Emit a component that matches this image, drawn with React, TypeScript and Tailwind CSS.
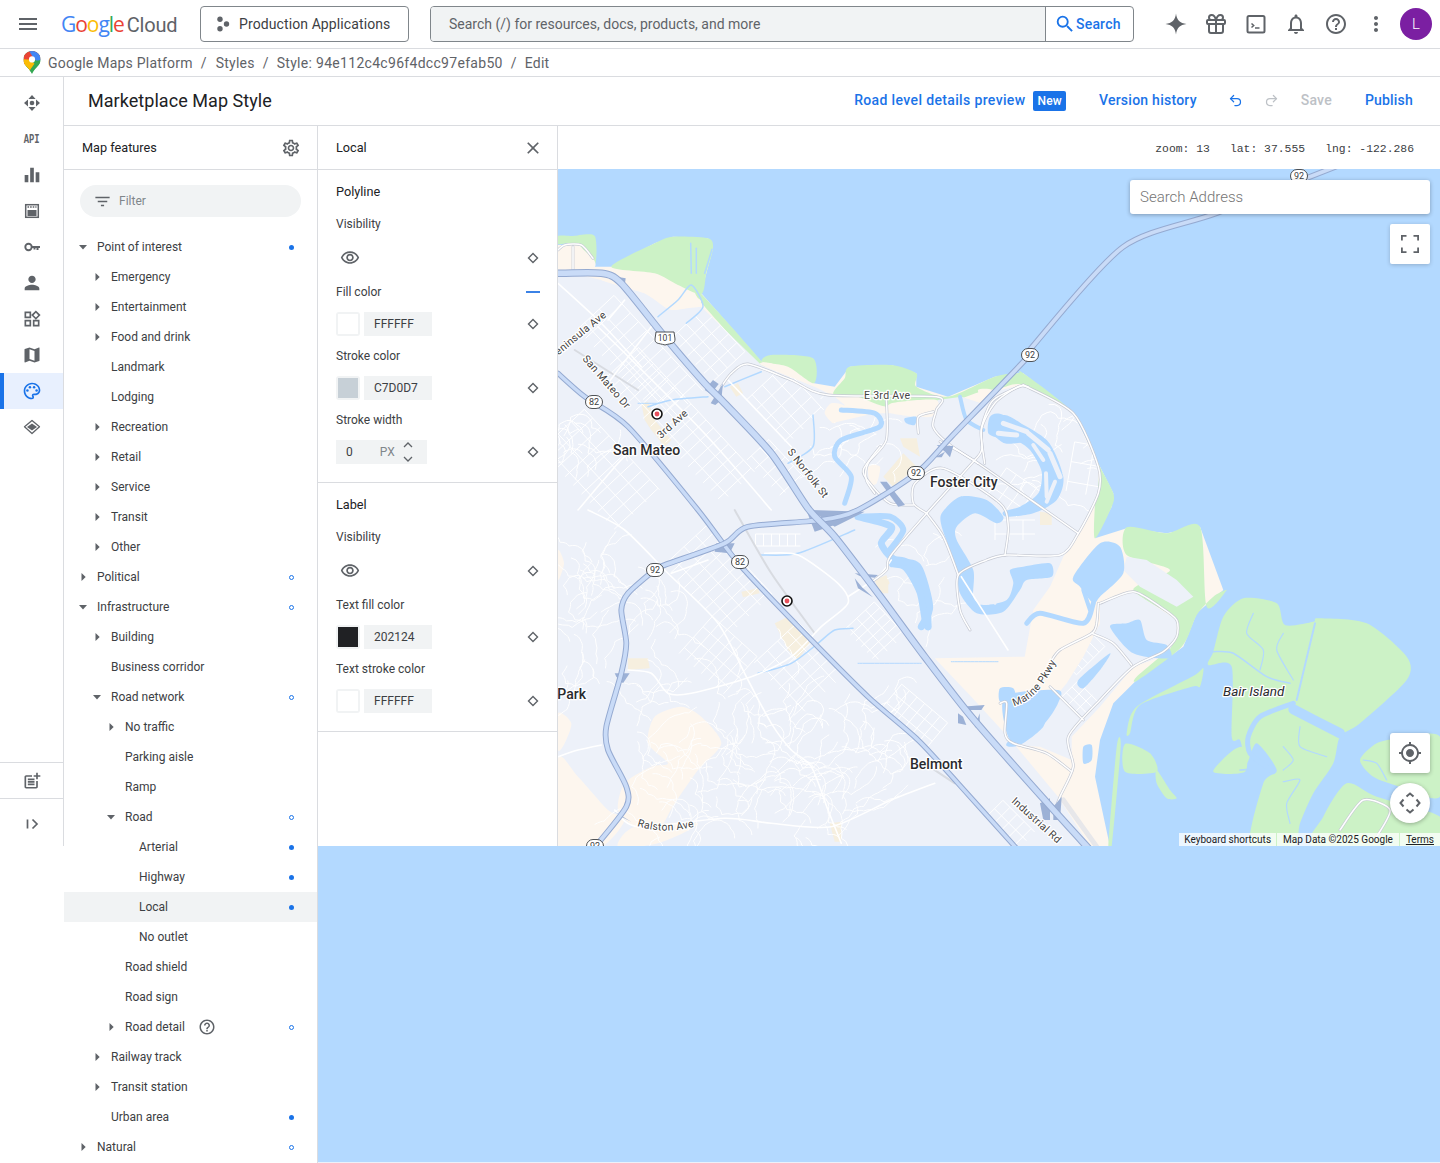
import React from "react";
import {
  MdMenu, MdOutlineNotifications, MdHelpOutline, MdMoreVert, MdOutlineSettings,
  MdFilterList, MdClose, MdOutlineVisibility, MdEqualizer, MdPerson,
  MdOutlineWidgets, MdMap, MdOutlinePalette, MdOutlinePostAdd, MdMyLocation, MdSearch,
} from "react-icons/md";
import { Gift, Undo2, Redo2 } from "lucide-react";

type Row = { label: string; level: number; arrow?: "down" | "right"; dot?: "fill" | "ring"; help?: boolean; selected?: boolean };
const rows: Row[] = [
  { label: "Point of interest", level: 0, arrow: "down", dot: "fill" },
  { label: "Emergency", level: 1, arrow: "right" },
  { label: "Entertainment", level: 1, arrow: "right" },
  { label: "Food and drink", level: 1, arrow: "right" },
  { label: "Landmark", level: 1 },
  { label: "Lodging", level: 1 },
  { label: "Recreation", level: 1, arrow: "right" },
  { label: "Retail", level: 1, arrow: "right" },
  { label: "Service", level: 1, arrow: "right" },
  { label: "Transit", level: 1, arrow: "right" },
  { label: "Other", level: 1, arrow: "right" },
  { label: "Political", level: 0, arrow: "right", dot: "ring" },
  { label: "Infrastructure", level: 0, arrow: "down", dot: "ring" },
  { label: "Building", level: 1, arrow: "right" },
  { label: "Business corridor", level: 1 },
  { label: "Road network", level: 1, arrow: "down", dot: "ring" },
  { label: "No traffic", level: 2, arrow: "right" },
  { label: "Parking aisle", level: 2 },
  { label: "Ramp", level: 2 },
  { label: "Road", level: 2, arrow: "down", dot: "ring" },
  { label: "Arterial", level: 3, dot: "fill" },
  { label: "Highway", level: 3, dot: "fill" },
  { label: "Local", level: 3, dot: "fill", selected: true },
  { label: "No outlet", level: 3 },
  { label: "Road shield", level: 2 },
  { label: "Road sign", level: 2 },
  { label: "Road detail", level: 2, arrow: "right", dot: "ring", help: true },
  { label: "Railway track", level: 1, arrow: "right" },
  { label: "Transit station", level: 1, arrow: "right" },
  { label: "Urban area", level: 1, dot: "fill" },
  { label: "Natural", level: 0, arrow: "right", dot: "ring" },
];

/* ---------- map geometry helpers (drawing only) ---------- */
const zones: Record<string, [number, number, number]> = {
  a: [558, 170, 1 / 3],
  b: [558, 510, 1 / 3],
  c: [860, 370, 1 / 3],
  d: [1000, 590, 1 / 3],
  p: [0, 0, 1],
};
function pts(s: string): [number, number][] {
  let z = zones.p;
  const out: [number, number][] = [];
  s.trim().split(/\s+/).forEach((t) => {
    if (zones[t]) { z = zones[t]; return; }
    const [x, y] = t.split(",").map(Number);
    out.push([z[0] + x * z[2], z[1] + y * z[2]]);
  });
  return out;
}
function curve(s: string, closed = false) {
  const p = pts(s);
  const n = p.length;
  const at = (i: number) => (closed ? p[(i + n) % n] : p[Math.max(0, Math.min(n - 1, i))]);
  let d = `M${p[0][0].toFixed(1)} ${p[0][1].toFixed(1)}`;
  const last = closed ? n : n - 1;
  for (let i = 0; i < last; i++) {
    const p0 = at(i - 1), p1 = at(i), p2 = at(i + 1), p3 = at(i + 2);
    const k = 0.13;
    d += `C${(p1[0] + (p2[0] - p0[0]) * k).toFixed(1)} ${(p1[1] + (p2[1] - p0[1]) * k).toFixed(1)} ${(p2[0] - (p3[0] - p1[0]) * k).toFixed(1)} ${(p2[1] - (p3[1] - p1[1]) * k).toFixed(1)} ${p2[0].toFixed(1)} ${p2[1].toFixed(1)}`;
  }
  return d + (closed ? "Z" : "");
}
function poly(s: string) {
  return "M" + pts(s).map((q) => `${q[0].toFixed(1)} ${q[1].toFixed(1)}`).join("L") + "Z";
}
function grid(cx: number, cy: number, len: number, wid: number, ang: number, sLen: number, sWid: number) {
  const r = (ang * Math.PI) / 180;
  const ux = Math.cos(r), uy = Math.sin(r), vx = -uy, vy = ux;
  let d = "";
  for (let t = -wid / 2; t <= wid / 2; t += sWid) {
    d += `M${(cx + vx * t - ux * len / 2).toFixed(1)} ${(cy + vy * t - uy * len / 2).toFixed(1)}L${(cx + vx * t + ux * len / 2).toFixed(1)} ${(cy + vy * t + uy * len / 2).toFixed(1)}`;
  }
  for (let t = -len / 2; t <= len / 2; t += sLen) {
    d += `M${(cx + ux * t - vx * wid / 2).toFixed(1)} ${(cy + uy * t - vy * wid / 2).toFixed(1)}L${(cx + ux * t + vx * wid / 2).toFixed(1)} ${(cy + uy * t + vy * wid / 2).toFixed(1)}`;
  }
  return d;
}
const rnd = (i: number) => { const v = Math.sin(i * 12.9898) * 43758.5453; return v - Math.floor(v); };
function wiggles(x: number, y: number, w: number, h: number, n: number, seed: number) {
  let d = "";
  for (let i = 0; i < n; i++) {
    let px = x + rnd(seed + i * 7) * w, py = y + rnd(seed + i * 11) * h;
    let a = rnd(seed + i * 13) * 6.28;
    d += `M${px.toFixed(1)} ${py.toFixed(1)}`;
    for (let j = 0; j < 6; j++) {
      a += (rnd(seed + i * 17 + j * 3) - 0.5) * 2.2;
      const nx = px + Math.cos(a) * 10, ny = py + Math.sin(a) * 10;
      d += `Q${(px + nx) / 2 + 2} ${(py + ny) / 2 - 2} ${nx.toFixed(1)} ${ny.toFixed(1)}`;
      px = nx; py = ny;
    }
  }
  return d;
}

const GREENS = [
  "a 0,198 40,198 46,198 110,198 110,285 60,222 0,222",
  "a 160,290 290,220 345,200 450,205 465,235 445,310 430,372 360,345 290,310",
  "a 430,372 612,575 600,585 425,392",
  "a 612,575 640,555 765,565 768,640 690,590",
  "a 826,672 860,625 875,590 1000,585 1075,610 1075,650 1170,680 1310,620 1380,610 c 490,10 640,130 720,290 760,370 755,410 705,505 705,400 715,290 640,130 490,45 420,55 360,65 300,85 230,80 a 1200,690 1000,712 900,680",
  "c 800,472 920,490 1020,470 d 620,50 680,0 640,20 590,75 545,170 415,270 410,260 510,170 530,90 400,0 c 930,600 800,555",
  "d 640,185 670,80 730,25 830,40 855,105 940,95 955,85 1100,100 1220,200 1220,270 1080,400 1020,440 1000,520 940,610 900,700 880,770 750,770 790,580 830,540 770,460 740,520 720,450 695,440 695,230 625,225",
  "d 380,430 410,350 580,258 610,235 600,290 575,290 420,345 390,430",
  "d 375,462 450,490 470,545 375,545",
  "d 640,545 700,480 735,475 735,545",
  "d 1080,510 1130,460 1200,445 1320,440 1320,620 1200,590 1120,560",
  "d 945,770 970,680 1040,580 1130,620 1320,680 1320,770",
  "d 325,770 350,470 362,470 335,770",
  "d 470,540 510,600 530,625 500,625 470,580",
];
const GRAY = [
  "a 0,300 130,330 260,370 340,420 430,410 610,585 770,650 830,680 860,705 820,760 950,730 1000,730 1100,720 1140,690 1210,680 1270,700 c 420,60 490,45 640,130 715,290 715,370 655,490 610,560 570,650 520,720 b 1400,440 1130,445 1240,560 1350,680 1500,860 p 1090,846 558,846",
  "d 300,40 400,5 530,90 530,140 500,195 400,230 300,350 215,440 215,510 120,470 40,465 100,400 200,280 250,200 280,140 300,100",
  "c 800,560 860,570 950,630 1000,680 950,710 840,650 790,600",
];
const SANDS = [
  "b 290,620 370,590 430,620 490,700 420,780 350,880 300,960 230,950 180,900 200,820 280,770 330,760 270,700",
  "b 0,745 60,800 150,900 200,930 130,1010 0,1010",
  "b 230,950 420,940 300,1000 180,1010",
  "b 0,120 18,160 0,210",
  "b 0,610 40,640 20,700 0,720",
  "a 820,700 860,710 830,760 800,730",
  "a 1000,700 1135,690 1120,740 1000,730",
  "a 1260,660 1300,660 1280,700",
  "a 130,330 190,315 300,335 430,392 340,420 260,370",
  "c 25,290 60,290 50,340 30,340",
  "a 0,235 45,235 48,290 0,292",
  "a 50,235 70,235 108,270 108,292 50,292",
  "a 610,585 640,580 700,615 770,650",
];
const YELLOW = [
  "a 250,700 270,695 290,750 340,810 320,830 280,780 260,750",
  "a 515,650 540,640 555,670 535,680",
  "b 210,445 270,445 275,475 210,480",
  "b 550,245 600,235 605,250 555,262",
  "b 650,340 690,320 760,390 720,450 690,420",
  "b 950,210 985,195 995,220 965,250",
  "b 815,940 850,935 850,995 830,995",
  "c 120,205 170,205 180,260 130,230",
  "c 130,250 170,290 100,350 70,320",
  "c 540,425 575,430 575,465 540,465",
  "c 300,620 325,615 325,670 305,670",
  "c 50,625 85,640 85,670 50,670",
];
const WATER_FILL = [
  "c 385,190 390,140 430,135 560,210 610,320 590,390 520,430 440,440 430,425 480,410 535,370 545,305 510,240 465,210 420,205",
  "c 245,430 300,380 380,390 430,440 410,460 345,430 290,470 290,510 340,600 340,680 370,705 440,690 460,640 450,600 490,590 570,580 575,620 500,630 480,660 430,725 350,730 300,670 290,600 270,540 245,470",
  "c 640,620 720,520 780,530 790,610 720,680 700,700 660,650",
  "c 90,560 150,570 200,640 215,770 190,770 170,670 130,600 90,590",
  "d 20,460 135,350 130,410 60,465",
  "d 380,100 420,90 440,150 500,165 510,205 400,190 330,110",
  "d 235,270 330,190 300,240 250,295",
  "d 0,295 40,295 45,330 0,335",
  "d 250,470 275,465 275,510 250,520",
  "b 1340,560 1500,540 1500,580 1460,640 1390,690 1350,680",
  "a 1040,745 1075,740 1070,765 1045,760",
  "a 1290,770 1340,735 1400,770 1410,810 1340,820",
];
const WATER_STROKE: [string, number][] = [
  ["a 850,720 950,730 965,770 850,810 830,860 880,920 860,1000", 5],
  ["b 900,20 1000,50 970,100 1010,150 1080,170 1115,290 1090,350", 7],
  ["a 300,440 360,390 400,345 435,410 385,460", 1.5],
  ["a 270,710 340,690 450,680", 1.5],
  ["a 765,735 765,830 690,880", 1.5],
  ["a 500,650 610,605", 1.5],
  ["a 398,220 400,310", 1.5],
  ["a 415,235 415,310", 1.5],
  ["a 440,310 462,238", 1.5],
  ["b 600,490 700,460 780,400 830,360 885,355", 1.5],
  ["b 900,460 1090,460", 1],
  ["b 610,135 720,130 890,60", 1.5],
  ["b 1180,455 1320,455", 1],
  ["d 80,100 120,70 250,100 280,40", 5],
  ["d 270,60 250,0", 4],
  ["c 300,80 320,150 370,180", 4],
  ["c 0,440 90,440 130,480 90,540", 6],
  ["a 240,700 300,700", 1],
  ["d 880,340 780,380 745,440 750,490 800,530 820,545", 5],
  ["d 880,358 1020,430", 10],
  ["d 945,100 890,330", 2],
  ["d 640,185 700,190 800,260 870,280", 1.5],
  ["d 760,70 740,130 790,180 780,240", 1.2],
  ["d 850,130 830,180 880,270", 1.2],
  ["d 900,410 900,470 980,500", 1.2],
  ["d 850,470 880,510 850,540", 1.2],
  ["d 850,575 900,570 860,640 870,700", 1.2],
  ["d 1090,510 1130,520 1160,570", 1.2],
  ["d 740,540 720,540 800,530", 1],
];
const LAND_ON_WATER: [string, number][] = [
  ["c 430,160 500,185", 5],
  ["c 415,190 470,195", 5],
  ["c 505,190 565,240", 5],
  ["c 520,225 550,270", 4],
  ["c 570,250 600,320", 5],
  ["c 558,310 560,380", 4],
  ["c 585,335 560,395", 4],
  ["c 360,670 360,700", 3],
  ["c 385,665 385,700", 3],
  ["c 410,670 405,700", 3],
];
const ARTERIAL = [
  "a 0,240 20,225 70,225 105,265",
  "a 45,230 45,298",
  "a 490,650 520,610 570,582 700,630 810,675 1135,680 1135,720 1125,770 1170,820 1260,880",
  "c 240,215 340,270 655,490",
  "a 985,680 985,810 930,880 925,930 950,970",
  "c 175,190 175,140 220,125",
  "c 490,45 640,130 715,290 715,370 655,490 600,555 440,555 380,570 295,615 300,720 330,780",
  "c 490,45 400,90 365,170 365,240 340,275 200,430 90,560 80,600 30,640",
  "c 200,430 160,400 165,340 250,295 420,400 445,470 435,555",
  "c 200,430 250,500 295,615",
  "d 300,40 400,5 480,50 530,90 530,140 490,185 400,230 300,330 205,440 220,530 180,620 165,660",
  "d 295,40 290,100 275,130 180,180 150,220",
  "d 275,130 340,160 395,225",
  "d 150,290 250,390",
  "d 0,340 20,340 15,430 40,460 140,490 215,545",
  "d 1020,720 1090,630 1170,660 1130,740",
  "a 1280,880 1270,780 1310,700 1380,650 1410,650",
  "c 60,230 10,300 30,340 90,400 160,405",
];
const MINOR = [
  "b 90,0 200,60 330,190 480,340 570,510 640,640 700,720 760,770 810,900 850,1000",
  "b 620,130 720,135 840,220 870,280 790,350 700,440 580,500 400,550 330,550 280,490 210,480",
  "b 170,900 240,950 500,925 640,940 820,950 1000,870 1130,820",
  "a 150,450 200,390",
  "a 280,470 180,600 150,640",
  "a 60,1020 180,880 230,830",
  "a 120,470 430,780 640,1020",
  "a 510,630 700,830",
  "a 0,340 130,460 250,590",
  "b 340,190 450,150",
  "b 1210,200 1350,420",
  "b 1000,150 960,200 870,260",
  "b 0,740 60,720 130,705",
];
const RAMPS = [
  "a 440,660 465,630 482,642 458,672",
  "a 458,700 495,640 490,690 472,705",
  "a 185,322 203,325 200,345",
  "c 230,225 280,228 270,262 255,245",
  "c 225,262 255,245 245,262",
  "c 60,335 80,335 135,405 115,410",
  "b 890,190 960,195 950,203 905,198",
  "b 890,205 900,235 945,262 912,232",
  "b 1210,590 1280,585 1270,600 1220,600",
  "b 1200,610 1200,640 1225,645 1215,620",
  "b 1265,610 1265,660 1250,650",
  "d 120,640 150,625 150,690 130,690",
  "d 160,650 185,620 180,690 160,690",
  "b 170,490 215,490 195,520 175,500",
  "b 170,905 220,935 190,920",
  "b 475,100 530,100 515,130 470,125",
  "b 745,0 830,45 770,65",
  "b 760,0 920,5 830,50",
];

function MapDrawing() {
  const hwy = (d: string, w: number, key: string) => (
    <g key={key} fill="none" strokeLinecap="round" strokeLinejoin="round">
      <path d={d} stroke="#95aad1" strokeWidth={w + 2} />
      <path d={d} stroke="#c9dbf7" strokeWidth={w} />
    </g>
  );
  const hwy101 = curve("a 0,310 130,310 190,340 320,500 440,640 500,700 640,850 750,1015 b 830,80 960,250 1100,440 1240,620 1460,870 p 1090,850");
  const elCamino = curve("a 0,610 80,680 210,770 420,1020 b 550,170 760,390 930,560 1080,690 1200,820 p 1018,850");
  const hwy92 = curve("p 1340,165 1217,213 1123,247 1033,346 a 1415,555 1180,800 1075,910 900,1020 b 790,30 570,50 500,100 320,165 290,180 210,250 190,300 205,400 190,490 145,650 150,720 205,830 205,890 120,1000 p 590,850");

  const shield = (x: number, y: number, t: string, w = 17) => (
    <g key={t + x}>
      <rect x={x - w / 2} y={y - 6.5} width={w} height={13} rx={6.5} fill="#fff" stroke="#3c4043" strokeWidth={0.9} />
      <text x={x} y={y + 3} textAnchor="middle" fontSize={9} fill="#3c4043" fontFamily="Roboto, sans-serif">{t}</text>
    </g>
  );
  const station = (x: number, y: number) => (
    <g key={x}>
      <circle cx={x} cy={y} r={5} fill="#fff" stroke="#111" strokeWidth={1.6} />
      <circle cx={x} cy={y} r={2.4} fill="#e8505b" />
    </g>
  );
  const halo = { paintOrder: "stroke", stroke: "#fff", strokeWidth: 2.5, strokeLinejoin: "round" as const };
  const small = { fontSize: 10.5, fill: "#444", fontFamily: "Roboto, sans-serif", letterSpacing: 0.3, style: halo };
  const big = { fontSize: 14, fontWeight: 500, fill: "#2a2b2e", fontFamily: "Roboto, sans-serif", style: halo };

  return (
    <svg viewBox="558 169 882 677" className="absolute inset-0 h-full w-full">
      <defs>
        <path id="marine" d="M1014 706 C1030 702 1042 690 1056 662" />
        <path id="ralston" d="M637 826 C655 832 675 832 697 826" />
        <clipPath id="landclip">{GRAY.map((s, i) => <path key={i} d={poly(s)} />)}</clipPath>
      </defs>
      <rect x="558" y="169" width="882" height="677" fill="#b3d9ff" />
      <path d={poly("a 0,225 110,225 110,290 160,290 290,220 345,200 450,205 465,235 445,310 430,370 610,575 640,555 765,565 768,640 830,650 875,590 1000,585 1075,610 1075,650 1170,680 1310,620 1380,610 c 490,10 640,130 720,290 760,370 755,410 705,505 800,475 920,490 1020,470 d 670,0 590,70 550,170 410,270 340,340 300,450 285,560 330,770 p 1110,846 558,846")} fill="#fdf6ee" />
      {GREENS.map((s, i) => <path key={i} d={curve(s, true)} fill="#ccf2c6" />)}
      {GRAY.map((s, i) => <path key={i} d={poly(s)} fill="#edf1f9" />)}
      {SANDS.map((s, i) => <path key={i} d={curve(s, true)} fill="#fdf6ee" />)}
      {YELLOW.map((s, i) => <path key={i} d={poly(s)} fill="#f6efdf" />)}

      <g fill="none" stroke="#ffffff" strokeWidth={1} clipPath="url(#landclip)">
        <path d={grid(640, 360, 130, 50, 47, 12, 20)} />
        <path d={grid(680, 425, 170, 45, 47, 11, 18)} />
        <path d={grid(600, 470, 110, 60, 47, 12, 18)} />
        <path d={grid(708, 345, 60, 45, 47, 12, 12)} />
        <path d={grid(785, 405, 60, 50, 47, 14, 14)} />
        <path d={grid(775, 468, 50, 30, 47, 12, 12)} />
        <path d={grid(718, 580, 95, 60, 47, 10, 16)} />
        <path d={grid(718, 655, 60, 50, 42, 10, 14)} />
        <path d={grid(800, 668, 70, 60, 47, 12, 14)} />
        <path d={grid(875, 632, 45, 40, 47, 8, 12)} />
        <path d={grid(778, 540, 45, 12, 0, 8, 12)} />
        <path d={grid(915, 715, 60, 30, 40, 10, 12)} />
        <path d={grid(1010, 825, 45, 25, 45, 10, 12)} />
        <path d={grid(1015, 495, 45, 35, 35, 12, 12)} />
        <path d={grid(1090, 470, 40, 50, 10, 20, 20)} />
        <path d={grid(1015, 530, 40, 20, 0, 14, 14)} />
        <path d={grid(1080, 700, 25, 30, -45, 8, 10)} />
        <path d={grid(1085, 655, 40, 16, -45, 8, 16)} />
        <path d={wiggles(630, 680, 220, 160, 90, 3)} />
        <path d={wiggles(560, 560, 50, 130, 26, 41)} />
        <path d={wiggles(635, 590, 40, 60, 12, 91)} />
        <path d={wiggles(850, 700, 70, 90, 18, 71)} />
        <path d={wiggles(920, 560, 50, 50, 8, 51)} />
        <path d={wiggles(830, 420, 50, 30, 10, 61)} />
        <path d={wiggles(1040, 410, 50, 80, 14, 81)} />
        <path d={wiggles(560, 420, 40, 60, 10, 21)} />
      </g>

      {WATER_FILL.map((s, i) => <path key={i} d={curve(s, true)} fill="#b3d9ff" />)}
      <g fill="none" strokeLinecap="round" strokeLinejoin="round">
        {WATER_STROKE.map(([s, w], i) => <path key={i} d={curve(s)} stroke="#b3d9ff" strokeWidth={w} />)}
        {LAND_ON_WATER.map(([s, w], i) => <path key={i} d={curve(s)} stroke="#edf1f9" strokeWidth={w} />)}
        <path d={curve("b 530,0 640,190 770,370")} stroke="#d8dbe1" strokeWidth={2} />
        <path d={curve("a 50,540 240,660")} stroke="#d8dbe1" strokeWidth={2} />
        <path d={curve("b 1100,760 1190,820")} stroke="#d8dbe1" strokeWidth={2} />
        <path d={curve("d 190,630 290,770")} stroke="#e7e7ea" strokeWidth={5} />
        {MINOR.map((s, i) => <path key={i} d={curve(s)} stroke="#ffffff" strokeWidth={1.6} />)}
        {ARTERIAL.map((s, i) => <path key={i} d={curve(s)} stroke="#c6cad4" strokeWidth={2.8} />)}
        {ARTERIAL.map((s, i) => <path key={i} d={curve(s)} stroke="#ffffff" strokeWidth={1.5} />)}
      </g>

      <g fill="#9cb1d6">{RAMPS.map((s, i) => <path key={i} d={poly(s)} />)}</g>
      {hwy(elCamino, 3.4, "ec")}
      {hwy(hwy92, 3.8, "92")}
      {hwy(hwy101, 5.5, "101")}

      {shield(1030, 355, "92")}
      {shield(916, 473, "92")}
      {shield(655, 570, "92")}
      {shield(1299, 176, "92")}
      {shield(595, 846, "92")}
      {shield(594, 402, "82")}
      {shield(740, 562, "82")}
      <g>
        <path d="M656 332 L674 332 L675 339 C675 344 672 343 665 345 C658 343 655 344 655 339Z" fill="#fff" stroke="#3c4043" strokeWidth={0.9} />
        <text x={665} y={341} textAnchor="middle" fontSize={8.5} fill="#3c4043" fontFamily="Roboto, sans-serif">101</text>
      </g>
      {station(657, 414)}
      {station(787, 601)}

      <text {...small} transform="translate(607 316) rotate(-39)" textAnchor="end">Peninsula Ave</text>
      <text {...small} transform="translate(582 359) rotate(49)">San Mateo Dr</text>
      <text {...small} transform="translate(661 439) rotate(-42)">3rd Ave</text>
      <text {...small} transform="translate(787 452) rotate(52)">S Norfolk St</text>
      <text {...small} x={864} y={399}>E 3rd Ave</text>
      <text {...small} transform="translate(1011 802) rotate(42)">Industrial Rd</text>
      <text {...small}><textPath href="#marine">Marine Pkwy</textPath></text>
      <text {...small}><textPath href="#ralston">Ralston Ave</textPath></text>
      <text {...big} x={613} y={455}>San Mateo</text>
      <text {...big} x={930} y={487}>Foster City</text>
      <text {...big} x={910} y={769}>Belmont</text>
      <text {...big} x={586} y={699} textAnchor="end">Park</text>
      <text {...big} x={1223} y={696} fontWeight={400} fontSize={13.5} fontStyle="italic">Bair Island</text>
    </svg>
  );
}

/* ---------- small drawn icons ---------- */
const Diamond = () => (
  <svg width="12" height="12" viewBox="0 0 12 12" className="block"><path d="M6 1.500 10.500 6 6 10.500 1.500 6Z" fill="none" stroke="#5f6368" strokeWidth="1.4" /></svg>
);
const Caret = ({ dir }: { dir: "down" | "right" }) =>
  dir === "down" ? (
    <svg width="14" height="14" viewBox="0 0 14 14" className="block"><path d="M3 5h8l-4 4.400Z" fill="#5f6368" /></svg>
  ) : (
    <svg width="14" height="14" viewBox="0 0 14 14" className="block"><path d="M5.500 3v8l4.200-4Z" fill="#5f6368" /></svg>
  );
const Move = () => (
  <svg width="20" height="20" viewBox="0 0 20 20" className="block" fill="#5f6368">
    <circle cx="10" cy="10" r="2.300" />
    <path d="M10 2l3.600 4H6.400zM10 18l3.600-4H6.400zM2 10l4-3.600v7.200zM18 10l-4-3.600v7.200z" />
  </svg>
);
const Quota = () => (
  <svg width="20" height="20" viewBox="0 0 20 20" className="block" fill="none" stroke="#5f6368">
    <rect x="3.700" y="3.700" width="12.600" height="12.600" strokeWidth="1.500" />
    <rect x="5.500" y="9" width="9" height="6" fill="#5f6368" stroke="none" />
    <path d="M5.500 6h9" strokeWidth="1.600" strokeDasharray="1.600 1" />
  </svg>
);
const KeyIcon = () => (
  <svg width="20" height="20" viewBox="0 0 20 20" className="block" fill="#5f6368">
    <circle cx="6.500" cy="10" r="3.200" fill="none" stroke="#5f6368" strokeWidth="1.900" />
    <path d="M9.500 9h8.500v2h-1.500v2h-2v-2h-1v1.500h-2V11h-2z" />
  </svg>
);
const Layers = () => (
  <svg width="20" height="20" viewBox="0 0 20 20" className="block">
    <path d="M10 6.500 15 10l-5 3.500L5 10Z" fill="#5f6368" />
    <path d="M10 3.500 17.500 9.700 10 16.500 2.500 9.700Z" fill="none" stroke="#5f6368" strokeWidth="1.300" strokeLinejoin="round" />
  </svg>
);
const Expand = () => (
  <svg width="20" height="20" viewBox="0 0 20 20" className="block" fill="none" stroke="#5f6368" strokeWidth="1.700">
    <path d="M5.500 5.500v9M10.500 5.500 15 10l-4.500 4.500" />
  </svg>
);
const Spark = () => (
  <svg width="24" height="24" viewBox="0 0 24 24" className="block"><path d="M12 1.500C12.700 8 16 11.300 22.500 12 16 12.700 12.700 16 12 22.500 11.300 16 8 12.700 1.500 12 8 11.300 11.300 8 12 1.500Z" fill="#5f6368" /></svg>
);
const Terminal = () => (
  <svg width="24" height="24" viewBox="0 0 24 24" className="block" fill="none" stroke="#5f6368" strokeWidth="2">
    <rect x="3.500" y="4" width="17" height="16.500" rx="1.500" />
    <path d="M7.500 11.500l2.200 2-2.200 2M11 16h4.500" strokeWidth="1.500" />
  </svg>
);
const Project = () => (
  <svg width="16" height="16" viewBox="0 0 16 16" className="block" fill="#5f6368">
    <circle cx="5" cy="3.200" r="2.700" /><circle cx="11.500" cy="8" r="2.700" /><circle cx="5" cy="12.800" r="2.700" />
  </svg>
);
const Pin = () => (
  <svg width="18" height="23" viewBox="0 0 18 24" className="block">
    <defs><clipPath id="pinclip"><path d="M9 0C4 0 0 3.800 0 8.800c0 3 1.300 5.100 3.300 7.400C5.500 18.700 7.800 21 9 24c1.200-3 3.500-5.300 5.700-7.800 2-2.300 3.300-4.400 3.300-7.400C18 3.800 14 0 9 0Z" /></clipPath></defs>
    <g clipPath="url(#pinclip)">
      <rect width="18" height="24" fill="#34a853" />
      <path d="M0 0h18v9L9 9 0 16Z" fill="#ea4335" />
      <path d="M0 8.500 9 9 0 17Z" fill="#fbbc04" />
      <path d="M1 17 9 9h9v-0.500L4 24Z" fill="#34a853" />
      <path d="M6 0h12v10H13L9 5Z" fill="#4285f4" />
      <path d="M0 16 7 9.500l5 4L5 24H0Z" fill="#fbbc04" />
      <path d="M12.500 12 18 9v3L7 24H4Z" fill="#34a853" />
    </g>
    <circle cx="9" cy="8.800" r="3.200" fill="#fff" />
  </svg>
);
const PanArrows = () => (
  <svg width="22" height="22" viewBox="0 0 22 22" className="block" fill="none" stroke="#5f6368" strokeWidth="2">
    <path d="M7.500 4.500 11 1.500l3.500 3M7.500 17.500l3.500 3 3.500-3M4.500 7.500 1.500 11l3 3.500M17.500 7.500l3 3.500-3 3.500" />
  </svg>
);
const FullscreenIcon = () => (
  <svg width="20" height="20" viewBox="0 0 20 20" className="block" fill="none" stroke="#5f6368" strokeWidth="1.800">
    <path d="M1.900 6.500V1.900h4.600M13.500 1.900h4.600v4.600M18.100 13.500v4.600h-4.600M6.500 18.100H1.900v-4.600" />
  </svg>
);
const Stepper = () => (
  <svg width="10" height="20" viewBox="0 0 10 20" className="block" fill="none" stroke="#5f6368" strokeWidth="1.300">
    <path d="M1 5 5 1l4 4M1 15l4 4 4-4" />
  </svg>
);

const label = "text-[12px] leading-[24px] text-[#3c4043]";
const Swatch = ({ color, value }: { color: string; value: string }) => (
  <div className="mt-2 flex h-6 items-center">
    <div className="flex h-6 w-6 items-center justify-center rounded-[3px] border-2 border-[#f1f3f4]">
      <div className="h-5 w-5" style={{ backgroundColor: color }} />
    </div>
    <div className="ml-1 flex h-6 w-[68px] items-center bg-[#f1f3f4] pl-[10px] text-[12px] text-[#3c4043]">{value}</div>
    <div className="ml-auto mr-[-1px]"><Diamond /></div>
  </div>
);
const EyeRow = () => (
  <div className="flex h-[46px] items-center pt-[2px]">
    <MdOutlineVisibility className="ml-[4px] text-[20px] text-[#5f6368]" />
    <div className="ml-auto mr-[-1px]"><Diamond /></div>
  </div>
);

export default function App() {
  const railItems = [
    <Move key="1" />,
    <span key="2" className="inline-block scale-x-[0.68] font-[family-name:'Liberation_Mono',monospace] text-[13px] font-bold leading-none text-[#5f6368]">API</span>,
    <MdEqualizer key="3" className="text-[22px] text-[#5f6368]" />,
    <Quota key="4" />,
    <KeyIcon key="5" />,
    <MdPerson key="6" className="text-[22px] text-[#5f6368]" />,
    <MdOutlineWidgets key="7" className="text-[20px] text-[#5f6368]" />,
    <MdMap key="8" className="text-[20px] text-[#5f6368]" />,
    <MdOutlinePalette key="9" className="text-[20px] text-[#1a73e8]" />,
    <Layers key="10" />,
  ];
  return (
    <div className="flex h-[1163px] w-[1440px] flex-col overflow-hidden bg-white font-[family-name:Roboto,sans-serif] text-[#202124]">
      {/* top bar */}
      <header className="flex h-[49px] shrink-0 items-center border-b border-[#dadce0]">
        <MdMenu className="ml-[16px] text-[24px] text-[#5f6368]" />
        <div className="ml-[21px] flex w-[116px] items-baseline text-[21px] leading-none">
          <span className="font-[family-name:'Open_Sans',sans-serif] tracking-[-1.05px]">
            <span className="text-[#4285f4]">G</span><span className="text-[#ea4335]">o</span><span className="text-[#fbbc04]">o</span><span className="text-[#4285f4]">g</span><span className="text-[#34a853]">l</span><span className="text-[#ea4335]">e</span>
          </span>
          <span className="ml-[3px] text-[20px] tracking-[-0.2px] text-[#5f6368]">Cloud</span>
        </div>
        <div className="ml-[23px] flex h-9 w-[209px] items-center rounded-[4px] border border-[#80868b] pl-[14px]">
          <Project />
          <span className="ml-[8px] text-[14px] tracking-[0.1px] text-[#3c4043]">Production Applications</span>
        </div>
        <div className="ml-[21px] flex h-9 w-[704px] items-center overflow-hidden rounded-[4px] border border-[#80868b]">
          <div className="flex h-full flex-1 items-center border-r border-[#80868b] bg-[#f1f3f4] pl-[18px] text-[14px] text-[#5f6368]">Search (/) for resources, docs, products, and more</div>
          <div className="flex h-full w-[87px] items-center pl-[8px] text-[14px] font-medium tracking-[0.2px] text-[#1a73e8]">
            <MdSearch className="text-[22px]" /><span>Search</span>
          </div>
        </div>
        <div className="ml-[22px] flex items-center">
          {[<Spark key="a" />, <Gift key="b" size={24} strokeWidth={2} className="text-[#5f6368]" />, <Terminal key="c" />, <MdOutlineNotifications key="d" className="text-[24px] text-[#5f6368]" />, <MdHelpOutline key="e" className="text-[24px] text-[#5f6368]" />, <MdMoreVert key="f" className="text-[24px] text-[#5f6368]" />].map((ic, i) => (
            <div key={i} className="flex h-10 w-10 items-center justify-center">{ic}</div>
          ))}
        </div>
        <div className="ml-[4px] flex h-8 w-8 items-center justify-center rounded-full bg-[#7b1fa2] text-[15px] font-light text-white">L</div>
      </header>

      {/* breadcrumb */}
      <div className="flex h-[28px] shrink-0 items-center gap-[8px] border-b border-[#dadce0] pl-[23px] pt-[2px] text-[14px] tracking-[0.22px] text-[#5f6368]">
        <div className="-mt-[2px] mr-[-1px]"><Pin /></div>
        <span>Google Maps Platform</span><span className="w-[7px]">/</span><span>Styles</span><span className="w-[6px]">/</span>
        <span className="tracking-[0.3px]">Style: 94e112c4c96f4dcc97efab50</span><span className="w-[6px]">/</span><span>Edit</span>
      </div>

      <div className="flex min-h-0 flex-1">
        {/* rail */}
        <nav className="flex h-[769px] w-[64px] shrink-0 flex-col justify-between border-r border-[#dadce0]">
          <div className="pt-[8px]">
            {railItems.map((ic, i) => (
              <div key={i} className={"flex h-9 items-center justify-center " + (i === 8 ? "border-l-4 border-[#1a73e8] bg-[#e8f0fe] pr-1" : "")}>{ic}</div>
            ))}
          </div>
          <div>
            <div className="flex h-[37px] items-center justify-center border-y border-[#dadce0]"><MdOutlinePostAdd className="text-[20px] text-[#5f6368]" /></div>
            <div className="flex h-[47px] items-center justify-center pt-[2px]"><Expand /></div>
          </div>
        </nav>

        <div className="flex min-w-0 flex-1 flex-col">
          {/* title bar */}
          <div className="flex h-[49px] shrink-0 items-center border-b border-[#dadce0] pb-[1px] pl-[24px] pr-[27px]">
            <h1 className="text-[18px] font-normal tracking-[0.05px]">Marketplace Map Style</h1>
            <div className="ml-auto flex items-center text-[14px] font-medium tracking-[0.2px] text-[#1a73e8]">
              <span className="tracking-[0.36px]">Road level details preview</span>
              <span className="ml-[8px] rounded-[2px] bg-[#1a73e8] px-[4px] py-[2px] text-[12px] leading-4 text-white">New</span>
              <span className="ml-[33px] tracking-[0.25px]">Version history</span>
              <Undo2 size={15} strokeWidth={2} className="ml-[31px]" />
              <Redo2 size={15} strokeWidth={2} className="ml-[21px] text-[#bdc1c6]" />
              <span className="ml-[22px] text-[#bdc1c6]">Save</span>
              <span className="ml-[33px]">Publish</span>
            </div>
          </div>

          <div className="flex min-h-0 flex-1">
            {/* features tree */}
            <aside className="w-[254px] shrink-0 border-r border-[#dadce0]">
              <div className="flex h-[44px] items-center border-b border-[#dadce0] pl-[18px] pr-[16px] pt-[1px]">
                <span className="text-[12.7px] text-[#202124]">Map features</span>
                <MdOutlineSettings className="ml-auto text-[20px] text-[#5f6368]" />
              </div>
              <div className="px-[16px] py-[15px]">
                <div className="flex h-8 w-[221px] items-center rounded-full bg-[#f1f3f4] pl-[13px] text-[12px] text-[#80868b]">
                  <MdFilterList className="text-[19px] text-[#5f6368]" />
                  <span className="ml-[7px]">Filter</span>
                </div>
              </div>
              {rows.map((r) => (
                <div key={r.label} className={"flex h-[30px] items-center text-[12px] text-[#3c4043] " + (r.selected ? "bg-[#f1f3f4]" : "")} style={{ paddingLeft: 12 + r.level * 14 }}>
                  <div className="mr-[7px] w-[14px]">{r.arrow && <Caret dir={r.arrow} />}</div>
                  <span>{r.label}</span>
                  {r.help && <MdHelpOutline className="ml-[13px] text-[18px] text-[#5f6368]" />}
                  {r.dot && <span className={"ml-auto mr-[23px] h-[5px] w-[5px] rounded-full " + (r.dot === "fill" ? "bg-[#1a73e8]" : "border border-[#1a73e8]")} />}
                </div>
              ))}
            </aside>

            {/* right column */}
            <div className="flex min-w-0 flex-1 flex-col bg-[#b3d9ff]">
              <div className="flex h-[720px] shrink-0">
                {/* local panel */}
                <section className="w-[240px] shrink-0 border-r border-[#dadce0] bg-white">
                  <div className="flex h-[44px] items-center border-b border-[#dadce0] pl-[18px] pr-[14px] pt-[1px]">
                    <span className="text-[12.7px]">Local</span>
                    <MdClose className="ml-auto text-[20px] text-[#5f6368]" />
                  </div>
                  <div className="border-b border-[#dadce0] pb-[18px] pl-[18px] pr-[19px]">
                    <div className="flex h-[44px] items-center text-[12.7px]">Polyline</div>
                    <div className="flex h-5 items-center text-[12px] text-[#3c4043]">Visibility</div>
                    <EyeRow />
                    <div className={"flex items-center " + label}>Fill color<span className="ml-auto mr-[-2px] h-[2px] w-[14px] bg-[#3b82e6]" /></div>
                    <Swatch color="#FFFFFF" value="FFFFFF" />
                    <div className={"mt-2 " + label}>Stroke color</div>
                    <Swatch color="#C7D0D7" value="C7D0D7" />
                    <div className={"mt-2 " + label}>Stroke width</div>
                    <div className="mt-2 flex h-6 items-center">
                      <div className="flex h-6 w-[91px] items-center bg-[#f1f3f4] pl-[10px] text-[12px] text-[#3c4043]">
                        0<span className="ml-[27px] text-[#80868b]">PX</span>
                        <span className="ml-[8px]"><Stepper /></span>
                      </div>
                      <div className="ml-auto mr-[-1px]"><Diamond /></div>
                    </div>
                  </div>
                  <div className="border-b border-[#dadce0] pb-[18px] pl-[18px] pr-[19px]">
                    <div className="flex h-[44px] items-center text-[12.7px]">Label</div>
                    <div className="flex h-5 items-center text-[12px] text-[#3c4043]">Visibility</div>
                    <EyeRow />
                    <div className={label}>Text fill color</div>
                    <Swatch color="#202124" value="202124" />
                    <div className={"mt-2 " + label}>Text stroke color</div>
                    <Swatch color="#FFFFFF" value="FFFFFF" />
                  </div>
                </section>

                {/* map column */}
                <div className="flex min-w-0 flex-1 flex-col bg-white">
                  <div className="flex h-[43px] shrink-0 items-center justify-end gap-[20px] pr-[26px] pt-[5px] font-[family-name:'Liberation_Mono',monospace] text-[11.4px] text-[#3c4043]">
                    <span>zoom: 13</span><span>lat: 37.555</span><span>lng: -122.286</span>
                  </div>
                  <div className="relative min-h-0 flex-1 overflow-hidden bg-[#b3d9ff]">
                    <MapDrawing />
                    <div className="absolute left-[572px] top-[11px] flex h-[34px] w-[300px] items-center rounded-[3px] bg-white pl-[10px] text-[15px] font-light text-[#757575] shadow-[0_1px_4px_rgba(0,0,0,0.3)]">Search Address</div>
                    <div className="absolute left-[832px] top-[55px] flex h-10 w-10 items-center justify-center rounded-[2px] bg-white shadow-[0_1px_4px_rgba(0,0,0,0.2)]"><FullscreenIcon /></div>
                    <div className="absolute left-[832px] top-[564px] flex h-10 w-10 items-center justify-center rounded-[3px] bg-white shadow-[0_1px_4px_rgba(0,0,0,0.3)]"><MdMyLocation className="text-[24px] text-[#5f6368]" /></div>
                    <div className="absolute left-[832px] top-[614px] flex h-10 w-10 items-center justify-center rounded-full bg-white shadow-[0_1px_4px_rgba(0,0,0,0.3)]"><PanArrows /></div>
                    <div className="absolute bottom-0 right-0 flex h-[13px] items-center text-[10px] leading-[13px] text-[#202124]">
                      <span className="bg-white/75 px-[5px]">Keyboard shortcuts</span>
                      <span className="ml-px bg-white/75 px-[6px]">Map Data ©2025 Google</span>
                      <span className="ml-px bg-white/75 px-[6px] underline">Terms</span>
                    </div>
                  </div>
                </div>
              </div>
              <div className="mt-auto h-px bg-[#edf1f9]" />
            </div>
          </div>
        </div>
      </div>
    </div>
  );
}
